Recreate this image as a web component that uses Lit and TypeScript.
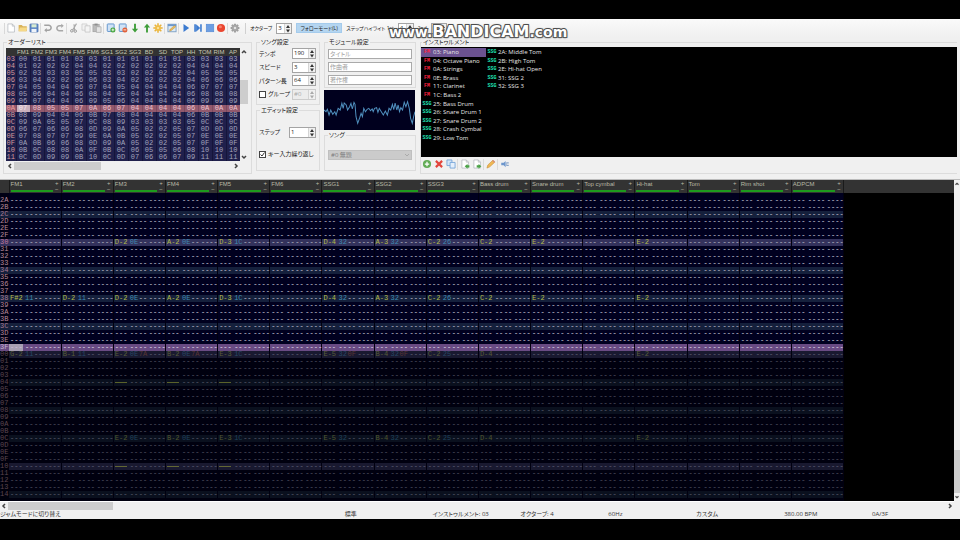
import { LitElement, html, css, svg, nothing, TemplateResult } from "lit";
import { customElement, property } from "lit/decorators.js";
import { classMap } from "lit/directives/class-map.js";

const ORDER_TRACKS = "FM1 FM2 FM3 FM4 FM5 FM6 SG1 SG2 SG3 BD SD TOP HH TOM RIM AP".split(" ");
const ORDER_ROWS = [
  "03 00 01 01 01 03 03 01 01 01 01 01 01 03 03 03 03",
  "04 01 02 02 02 04 04 02 02 02 02 02 02 04 04 04 04",
  "05 02 03 03 03 05 05 03 03 02 02 02 02 04 05 05 05",
  "06 03 04 02 02 06 06 03 04 02 02 02 02 04 06 06 06",
  "07 04 05 04 04 06 07 04 05 04 04 04 04 06 07 07 07",
  "08 05 06 04 04 06 08 04 05 04 04 04 04 06 08 08 08",
  "09 06 07 04 04 06 09 05 06 04 04 04 04 06 09 09 09",
  "0A 07 08 05 05 07 0A 06 07 04 04 04 04 06 0A 0A 0A",
  "0B 08 09 04 04 06 0B 07 08 04 04 04 04 06 0B 0B 0B",
  "0C 09 0A 05 05 07 0C 08 09 03 03 03 03 05 0C 0C 0C",
  "0D 06 07 06 06 08 0D 09 0A 05 02 02 05 07 0D 0D 0D",
  "0E 07 08 07 07 09 0E 0A 0B 05 02 02 05 07 0E 0E 0E",
  "0F 0A 0B 06 06 08 0D 09 0A 05 02 02 05 07 0F 0F 0F",
  "10 0B 0C 08 08 0A 0F 0B 0C 06 05 05 06 08 10 10 10",
  "11 0C 0D 09 09 0B 10 0C 0D 07 06 06 07 09 11 11 11",
].map((r) => r.split(" "));

const TRACKS = [
  "FM1", "FM2", "FM3", "FM4", "FM5", "FM6", "SSG1", "SSG2", "SSG3",
  "Bass drum", "Snare drum", "Top cymbal", "Hi-hat", "Tom", "Rim shot", "ADPCM",
];

type Steps = Record<number, Record<number, string>>;
const MAIN: Record<number, string> = {
  2: "D-2 0E", 3: "A-2 0E", 4: "D-3 1C", 6: "D-4 32", 7: "A-3 32", 8: "C-2 26",
  9: "C-2", 10: "E-2", 12: "E-2",
};
const CURRENT: Steps = { 0x30: MAIN, 0x38: { 0: "F#2 11", 1: "D-2 11", ...MAIN } };
const OFF: Record<number, string> = { 2: "off", 3: "off", 4: "off" };
const NEXT: Steps = {
  0x00: {
    0: "G-2 11", 1: "B-1 11", 2: "E-2 0E 7A", 3: "B-2 0E 7A", 4: "E-3 1C",
    6: "E-5 32 0F", 7: "B-4 32 0F", 8: "C-2 25", 9: "D-4", 12: "E-2",
  },
  0x04: OFF,
  0x0c: { 2: "E-2 0E", 3: "B-2 0E", 4: "E-3 1C", 6: "E-5 32", 7: "B-4 32", 8: "C-2 25", 9: "D-4", 12: "E-2" },
  0x10: OFF,
};

const INSTRUMENTS: [string, string][] = [
  ["FM", "03: Piano"], ["FM", "04: Octave Piano"], ["FM", "0A: Strings"], ["FM", "0E: Brass"],
  ["FM", "11: Clarinet"], ["FM", "1C: Bass 2"], ["SSG", "25: Bass Drum"], ["SSG", "26: Snare Drum 1"],
  ["SSG", "27: Snare Drum 2"], ["SSG", "28: Crash Cymbal"], ["SSG", "29: Low Tom"],
  ["SSG", "2A: Middle Tom"], ["SSG", "2B: High Tom"], ["SSG", "2E: Hi-hat Open"],
  ["SSG", "31: SSG 2"], ["SSG", "32: SSG 3"],
];

const page = svg`<path d="M3 1.500h7l3.500 3.500v9.500H3z" fill="#fff" stroke="#a9adb3"/><path d="M10 1.500v3.500h3.500" fill="none" stroke="#a9adb3"/>`;
const ICONS: Record<string, TemplateResult> = {
  new: page,
  open: svg`<path d="M1 3h5l2 2h6v8H1z" fill="#d9b35a"/><path d="M1 13L3 7h12l-2 6z" fill="#f6d987"/>`,
  save: svg`<rect x="1.500" y="1.500" width="13" height="13" rx="1" fill="#5d86c6" stroke="#476fae"/><rect x="4" y="2" width="8" height="5" fill="#d8ecd2"/><rect x="4" y="9.500" width="8" height="5" fill="#eef3fa"/>`,
  undo: svg`<path d="M2 3.500h7a3.800 3.800 0 0 1 0 8H4" fill="none" stroke="#a2a2a2" stroke-width="2.400"/><path d="M6 8l-4 3.500L6 15z" fill="#a2a2a2"/>`,
  redo: svg`<path d="M13 12.500H7a3.800 3.800 0 0 1 0-8h4" fill="none" stroke="#a8a8a8" stroke-width="2.400"/><path d="M10 1l4 3.500L10 8z" fill="#a8a8a8"/>`,
  cut: svg`<path d="M12 1L6 11M8 2l1 9" stroke="#a8a8a8" stroke-width="1.800"/><circle cx="4.500" cy="12.500" r="2" fill="none" stroke="#989898" stroke-width="1.600"/><circle cx="10" cy="13" r="2" fill="none" stroke="#989898" stroke-width="1.600"/>`,
  copy: svg`<path d="M1.500 1.500h8v10h-8z" fill="#f2f2f2" stroke="#c2c2c2"/><path d="M6.500 4.500h8v10h-8z" fill="#f4f4f4" stroke="#b8b8b8"/>`,
  paste: svg`<rect x="1.500" y="2" width="10" height="12" fill="#bcbcbc" stroke="#9c9c9c"/><rect x="4" y="1" width="5" height="3" fill="#8e8e8e"/><path d="M7 6h7.500v9H7z" fill="#e4e4e4" stroke="#a2a2a2"/>`,
  addrow: svg`<rect x="2" y="1.500" width="11" height="12" rx="1" fill="#cfe2f6" stroke="#5e92cc" stroke-width="1.500"/><circle cx="11" cy="11" r="4" fill="#46a53e"/><path d="M11 8.800v4.400M8.800 11h4.400" stroke="#fff" stroke-width="1.300"/>`,
  delrow: svg`<rect x="2" y="1.500" width="11" height="12" rx="1" fill="#cfe2f6" stroke="#5e92cc" stroke-width="1.500"/><circle cx="11" cy="11" r="4" fill="#e0603a"/><path d="M8.800 11h4.400" stroke="#fff" stroke-width="1.300"/>`,
  down: svg`<path d="M6.500 1h3v8H13l-5 6-5-6h3.500z" fill="#3f9e3a"/>`,
  up: svg`<path d="M6.500 15h3V7H13L8 1 3 7h3.500z" fill="#3f9e3a"/>`,
  gear: svg`<path d="M8 0.500v15M0.500 8h15M2.700 2.700l10.600 10.600M13.300 2.700L2.700 13.300" stroke="#e9b23a" stroke-width="2.400"/><circle cx="8" cy="8" r="4.600" fill="#efbd48"/><circle cx="8" cy="8" r="1.800" fill="#fbe7a8"/>`,
  edit: svg`<rect x="1.500" y="2" width="13" height="12" fill="#dcebf8" stroke="#7ea0c4" stroke-width="1.500"/><path d="M1.500 3.500h13" stroke="#6c98cc" stroke-width="3"/><path d="M4 13l1-3 7-6 2 2-7 6z" fill="#e8ba5c" stroke="#b98a34" stroke-width=".7"/>`,
  play: svg`<path d="M4 1.500L13 8l-9 6.500z" fill="#3c7bd0"/>`,
  playfrom: svg`<path d="M2 2h2.600v12H2zM5 2l6.500 6L5 14zM11.500 2H14v12h-2.500z" fill="#3c7bd0"/>`,
  stop: svg`<rect x="2" y="2" width="12" height="12" fill="#6c9ee2" stroke="#5288d4"/>`,
  record: svg`<circle cx="8" cy="8" r="6.500" fill="#ea4630"/><circle cx="7" cy="6" r="2.500" fill="#f4826c"/>`,
  settings: svg`<path d="M8 1v14M1 8h14M3 3l10 10M13 3L3 13" stroke="#9a9a9a" stroke-width="3"/><circle cx="8" cy="8" r="5.500" fill="#a6a6a6"/><circle cx="8" cy="8" r="2" fill="#e4e4e4"/>`,
  add: svg`<circle cx="8" cy="8" r="6.500" fill="#62ac55"/><path d="M8 4.500v7M4.500 8h7" stroke="#fff" stroke-width="2"/>`,
  remove: svg`<path d="M3 3l10 10M13 3L3 13" stroke="#e2453c" stroke-width="3.400"/>`,
  clone: svg`<path d="M1.500 1.500h8v9h-8z" fill="#d5e6f8" stroke="#6d9fd6" stroke-width="1.300"/><path d="M6.500 5.500h8v9h-8z" fill="#e4effb" stroke="#6d9fd6" stroke-width="1.300"/>`,
  load: svg`${page}<path d="M7.500 11.500L12 8v2h3v3.500h-3v2z" fill="#4aa246"/>`,
  store: svg`${page}<path d="M15 11.500L10.500 8v2h-3v3.500h3v2z" fill="#4aa246"/>`,
  pencil: svg`<path d="M1.500 14.500l1.500-5L11 2l3 3-8 7.500z" fill="#f0b954" stroke="#c8903a"/><path d="M10 3l1.500-1.500 3 3L13 6z" fill="#d88a7a"/>`,
  mono: svg`<path d="M2 6h4l3-3v10l-3-3H2z" fill="#6d96cc"/><path d="M10 5h4v2h-3v2h3v2h-4" fill="#89a4c8"/>`,
};
const icon = (name: string) => html`<svg viewBox="0 0 16 16" aria-hidden="true">${ICONS[name]}</svg>`;

const TOOLS: [string, string][][] = [
  [["new", "新規"], ["open", "開く"], ["save", "保存"]],
  [["undo", "元に戻す"], ["redo", "やり直し"]],
  [["cut", "切り取り"], ["copy", "コピー"], ["paste", "貼り付け"]],
  [["addrow", "オーダー追加"], ["delrow", "オーダー削除"], ["down", "下へ"], ["up", "上へ"], ["gear", "モジュール設定"]],
  [["edit", "インストゥルメント編集"]],
  [["play", "再生"], ["playfrom", "パターン再生"], ["stop", "停止"], ["record", "ジャムモード"]],
  [["settings", "設定"]],
];

const base = css`
  :host, * { box-sizing: border-box; }
  button, input, select { font: inherit; color: inherit; margin: 0; padding: 0; border: 0; }
  button { background: none; display: grid; place-items: center; }
  svg { display: block; }
  table { border-collapse: collapse; border-spacing: 0; table-layout: fixed; }
  th, td { padding: 0; font-weight: 400; }
`;

@customElement("scroll-rail")
class ScrollRail extends LitElement {
  @property({ type: Boolean, reflect: true }) vertical = false;
  @property({ type: Number }) start = 0;
  @property({ type: Number }) size = 0.2;
  static styles = css`
    :host { display: flex; background: #f0f0f0; height: 8px; }
    :host([vertical]) { flex-direction: column; width: auto; height: auto; }
    svg { flex: none; width: 8px; height: 8px; fill: none; stroke: #444; stroke-width: 1.500; }
    .track { flex: 1; display: flex; min-width: 0; min-height: 0; }
    :host([vertical]) .track { flex-direction: column; }
    :host([vertical]) svg { width: 100%; }
    .thumb { background: #cdcdcd; }
  `;
  render() {
    const arrows = this.vertical ? ["M2 5l2-2 2 2", "M2 3l2 2 2-2"] : ["M5 2L3 4l2 2", "M3 2l2 2-2 2"];
    return html`
      <svg viewBox="0 0 8 8"><path d=${arrows[0]} /></svg>
      <div class="track">
        <div style="flex:${this.start}"></div>
        <div class="thumb" style="flex:${this.size}"></div>
        <div style="flex:${1 - this.start - this.size}"></div>
      </div>
      <svg viewBox="0 0 8 8"><path d=${arrows[1]} /></svg>
    `;
  }
}

@customElement("spin-box")
class SpinBox extends LitElement {
  @property() value = "";
  @property() label = "";
  @property({ type: Boolean, reflect: true }) disabled = false;
  static styles = [base, css`
    :host { display: flex; width: 24px; height: 11px; border: 1px solid #a4a4a4; background: #fff; color: #222; }
    :host([disabled]) { background: #ececec; border-color: #ccc; color: #aaa; }
    input { flex: 1; min-width: 0; width: 0; padding-left: 1px; background: none; line-height: 9px; font-size: 6px; }
    .arrows { width: 7px; background: #f0f0f0; border-left: 1px solid #d4d4d4; }
    svg { width: 6px; height: 9px; fill: #333; }
    :host([disabled]) svg { fill: #aaa; }
  `];
  render() {
    return html`
      <input type="text" inputmode="numeric" .value=${this.value} aria-label=${this.label} ?disabled=${this.disabled} />
      <div class="arrows"><svg viewBox="0 0 6 9"><path d="M1 4l2-3 2 3zM1 5.500l2 3 2-3z" /></svg></div>
    `;
  }
}

@customElement("order-list")
class OrderList extends LitElement {
  static styles = [base, css`
    :host { display: grid; grid-template-columns: minmax(0, 1fr) 8px; }
    table { width: 100%; background: #20204c; color: #a3a3bd; font: 7px/7px "Liberation Mono", monospace; text-align: center; }
    thead { background: #333; color: #c8c8b4; font: 6px/8px "Liberation Sans", sans-serif; }
    thead th { height: 8px; white-space: nowrap; }
    .row { width: 10px; color: #d49a9c; }
    td, tbody th { height: 7px; border-left: 1px solid #15153a; }
    tbody th { border-left: 0; }
    .now td, .now th { background: #92596d; color: #ecc4d0; border-color: #7c4a60; }
    .now .cursor { background: #cbb1bd; color: #f3e8ee; }
    .now .row { color: #f0a0a0; }
    .side { background: #f0f0f0; }
    .bottom { grid-column: 1; margin-top: 1px; }
  `];
  render() {
    return html`
      <table aria-label="オーダーリスト">
        <thead><tr><th class="row"></th>${ORDER_TRACKS.map((t) => html`<th>${t}</th>`)}</tr></thead>
        <tbody>
          ${ORDER_ROWS.map(([id, ...cells]) => html`
            <tr class=${classMap({ now: id === "0A" })}>
              <th class="row">${id}</th>
              ${cells.map((c, i) => html`<td class=${classMap({ cursor: i === 0 })}>${c}</td>`)}
            </tr>`)}
        </tbody>
      </table>
      <scroll-rail class="side" vertical .start=${0.25} .size=${0.24}></scroll-rail>
      <scroll-rail class="bottom" .start=${0} .size=${0.4}></scroll-rail>
    `;
  }
}

@customElement("pattern-editor")
class PatternEditor extends LitElement {
  static styles = [base, css`
    :host { display: grid; grid-template-columns: minmax(0, 1fr) 6px; grid-template-rows: minmax(0, 1fr) 9px; background: #f0f0f0; }
    .canvas { overflow: hidden; background: linear-gradient(#333 13px, #000 13px); }
    table { width: 844px; font: 7px/7px "Liberation Mono", monospace; color: #9494a8; }
    thead { background: #333; color: #b9b9a6; font: 6px/8px "Liberation Sans", sans-serif; }
    thead th { height: 13px; border-right: 1px solid #1a1a1a; text-align: left; }
    .num { width: 9px; background: #000014; color: #b78a9a; text-align: left; }
    thead .num { background: #333; }
    .head { display: grid; grid-template-columns: minmax(0, 1fr) 8px; height: 13px; padding-left: 1px; }
    .name { white-space: nowrap; border-bottom: 2px solid #1d9a1d; height: 12px; line-height: 9px; }
    .signs { line-height: 6px; text-align: center; }
    .signs button { width: 8px; height: 6px; line-height: 6px; }
    td { background: #00001f; border-right: 1px solid #000010; }
    tbody th, td { height: 7px; }
    .cell { display: grid; grid-template-columns: 15px 9px 10px minmax(0, 1fr); height: 7px; padding-left: 1px; white-space: nowrap; font-weight: 700; }
    .beat td { background: #15203c; }
    .bar td { background: #34325c; }
    .beat .num { color: #a77a92; background: #15203c; }
    .bar .num { color: #c07aa0; background: #34325c; }
    .now td, .now .num { background: #694b83; color: #c3b4d0; }
    .now .cursor { background: linear-gradient(90deg, #a79fb2 14px, #694b83 14px); }
    .note, .inst, .vol { font-weight: 400; }
    .note { color: #b4bc4a; }
    .inst { color: #3f8ab2; }
    .vol { color: #b8603c; }
    .off { align-self: center; width: 12px; height: 1px; background: #d2dc3c; }
    .next td { background: #00000f; }
    .next .num { color: #5c4650; background: #00000c; }
    .next .cell { opacity: 0.4; }
    .next.beat td { background: #0a101e; }
    .next.bar td { background: #191930; }
    .lead td, .lead th { height: 4px; }
    .side { grid-column: 2; grid-row: 1; }
    .under { grid-column: 1; border-top: 1px solid #fff; height: 9px; }
  `];

  private cell(text = "") {
    const [note, inst, vol] = text.split(" ");
    return html`<div class="cell">
      ${note === "off" ? html`<i class="off"></i>` : html`<span class=${note ? "note" : ""}>${note || "---"}</span>`}
      <span class=${inst ? "inst" : ""}>${inst || "--"}</span>
      <span class=${vol ? "vol" : ""}>${vol || "--"}</span>
      <span>----</span>
    </div>`;
  }

  private row(n: number, steps: Steps, next: boolean) {
    const id = n.toString(16).toUpperCase().padStart(2, "0");
    const cls = {
      next,
      bar: n % 16 === 0,
      beat: n % 4 === 0 && n % 16 !== 0,
      now: !next && n === 0x3f,
    };
    return html`<tr class=${classMap(cls)}>
      <th class="num">${id}</th>
      ${TRACKS.map((_, i) => html`<td class=${classMap({ cursor: i === 0 })}>${this.cell(steps[n]?.[i])}</td>`)}
    </tr>`;
  }

  render() {
    const current = Array.from({ length: 0x40 - 0x2a }, (_, i) => this.row(0x2a + i, CURRENT, false));
    const next = Array.from({ length: 0x15 }, (_, i) => this.row(i, NEXT, true));
    const blank = (cls: string) => html`<tr class=${cls}><th class="num"></th>${TRACKS.map(() => html`<td></td>`)}</tr>`;
    return html`
      <div class="canvas">
        <table aria-label="パターンエディタ">
          <thead><tr>
            <th class="num"></th>
            ${TRACKS.map((t) => html`<th><div class="head">
              <div class="name">${t}</div>
              <div class="signs"><button aria-label="${t} 展開">+</button><button aria-label="${t} 縮小">−</button></div>
            </div></th>`)}
          </tr></thead>
          <tbody>${blank("lead")}${current}${next}${blank("lead next")}</tbody>
        </table>
      </div>
      <scroll-rail class="side" vertical .start=${0.86} .size=${0.14}></scroll-rail>
      <scroll-rail class="under" .start=${0} .size=${0.112}></scroll-rail>
    `;
  }
}

@customElement("app-root")
class AppRoot extends LitElement {
  static styles = [base, css`
    :host {
      display: flex; flex-direction: column; height: 100vh; padding: 19px 0 21px; background: #000; color: #222;
      font: 6px/8px "Open Sans", "Noto Sans CJK JP", sans-serif; font-feature-settings: "palt";
    }
    .toolbar { flex: none; position: relative; display: flex; align-items: center; height: 18px; padding-left: 4px; background: linear-gradient(#fafafa, #f0f0f0); }
    .tools { display: flex; align-items: center; width: 237px; margin-right: 4px; border-left: 1px solid #d8d8d8; }
    .tools button { flex: 1; }
    .tools svg, .actions svg { width: 10px; height: 10px; }
    .sep { width: 2px; height: 11px; border-left: 1px solid #dadada; }
    .controls { display: flex; align-items: center; gap: 4px; border-left: 1px solid #d0d0d0; padding-left: 4px; white-space: nowrap; font-size: 5px; }
    .controls label { display: flex; align-items: center; gap: 4px; }
    .follow { width: 46px; height: 10px; background: #b4d5f0; border: 1px solid #a4cbec; }
    .small { width: 16px; }
    .mark { position: absolute; left: 389px; top: 3px; display: flex; align-items: baseline; color: #fff; font: 700 14px/20px "DejaVu Sans", sans-serif; -webkit-text-stroke: 2px #555; paint-order: stroke fill; text-shadow: 0 0 2px #333, 0 1px 2px #777; }
    .mark b { font-size: 16px; }

    .panels { flex: none; display: grid; grid-template-columns: 249px 64px 92px minmax(0, 1fr); gap: 4px; padding: 1px 3px 5px; background: #f0f0f0; border-bottom: 1px solid #bbb; }
    fieldset { margin: 0; padding: 0 2px; min-width: 0; border: 1px solid #dcdcdc; }
    legend { margin-left: 1px; padding: 0 1px; height: 8px; line-height: 8px; }
    .order { padding: 2px 1px 3px 0; }
    .column { display: flex; flex-direction: column; gap: 1px; }
    .line { display: flex; align-items: center; justify-content: space-between; white-space: nowrap; }
    .song { display: grid; grid-template-rows: repeat(4, 1fr); height: 58px; padding: 1px 1px 3px 0; }
    .edit { display: grid; grid-template-rows: 22px 22px; padding: 7px 1px 5px 0; }
    .wide { width: 27px; }
    .check { display: flex; align-items: center; gap: 2px; }
    input[type="checkbox"] { appearance: none; width: 7px; height: 7px; border: 1px solid #444; background: #fff; }
    .tick { position: relative; display: grid; }
    .tick svg { position: absolute; left: 1px; top: 1px; width: 5px; height: 5px; fill: none; stroke: #333; stroke-width: 1; }
    .module { display: grid; gap: 3px; padding: 3px 1px 2px; }
    .text { width: 100%; height: 10px; padding: 0 1px; background: #fff; border: 1px solid #aaa; line-height: 8px; }
    .text::placeholder { color: #a0a0a0; }
    .wave { width: 91px; height: 40px; margin-top: 1px; background: #00001e; }
    .wave path { fill: none; stroke: #4f8fbe; stroke-width: 3; }
    .pick { padding: 11px 1px 10px; }
    .pick select { appearance: none; display: block; width: 100%; height: 10px; padding-left: 2px; background: #cbcbcb; border: 1px solid #c0c0c0; color: #7c7c7c; opacity: 1; line-height: 8px; }
    .combo { position: relative; }
    .combo svg { position: absolute; right: 2px; top: 3px; width: 6px; height: 4px; fill: none; stroke: #aaa; }

    .instruments { border-right: 0; padding: 0; }
    .list { display: grid; grid-auto-flow: column; grid-template-rows: repeat(11, 1fr); grid-template-columns: 65px 65px; height: 110px; margin: 1px 0 0; padding: 1px 0 15px; background: #000; color: #e6e6e6; list-style: none; }
    .list li { display: grid; grid-template-columns: 11px minmax(0, 1fr); align-items: center; padding-left: 1px; white-space: nowrap; line-height: 8px; }
    .list .selected { background: #6b5290; }
    .fm, .ssg { font: 700 5px/8px "Liberation Mono", monospace; text-align: center; color: #ff2040; width: 10px; }
    .ssg { color: #1fe0b4; }
    .actions { display: flex; align-items: center; height: 14px; }
    .actions button { width: 12px; }

    pattern-editor { flex: 1; min-height: 0; }
    .status { flex: none; display: grid; grid-template-columns: 345fr repeat(7, 88fr); height: 9px; line-height: 9px; background: #f0f0f0; color: #333; white-space: nowrap; }
  `];

  render() {
    return html`
      <header class="toolbar">
        <nav class="tools" aria-label="ツールバー">
          ${TOOLS.map((group, i) => html`
            ${i ? html`<span class="sep"></span>` : nothing}
            ${group.map(([id, label]) => html`<button aria-label=${label}>${icon(id)}</button>`)}
          `)}
        </nav>
        <div class="controls">
          <label>オクターブ <spin-box class="small" value="3" label="オクターブ"></spin-box></label>
          <button class="follow">フォローモード(L)</button>
          <label>ステップハイライト 1st <spin-box class="small" value="4" label="1st"></spin-box></label>
          <label>2nd <spin-box class="small" value="16" label="2nd"></spin-box></label>
        </div>
        <div class="mark"><span>www.</span><b>BANDICAM</b><span>.com</span></div>
      </header>

      <main class="panels">
        <fieldset><legend>オーダーリスト</legend><order-list class="order"></order-list></fieldset>

        <div class="column">
          <fieldset>
            <legend>ソング設定</legend>
            <div class="song">
              <div class="line">テンポ<spin-box value="190" label="テンポ"></spin-box></div>
              <div class="line">スピード<spin-box value="3" label="スピード"></spin-box></div>
              <div class="line">パターン長<spin-box value="64" label="パターン長"></spin-box></div>
              <div class="line">
                <label class="check"><input type="checkbox" />グループ</label>
                <spin-box value="#0" label="グループ番号" disabled></spin-box>
              </div>
            </div>
          </fieldset>
          <fieldset>
            <legend>エディット設定</legend>
            <div class="edit">
              <div class="line">ステップ<spin-box class="wide" value="1" label="ステップ"></spin-box></div>
              <label class="check">
                <span class="tick"><input type="checkbox" checked /><svg viewBox="0 0 5 5"><path d="M.5 2.500L2 4l2.500-3.500" /></svg></span>
                キー入力繰り返し
              </label>
            </div>
          </fieldset>
        </div>

        <div class="column">
          <fieldset>
            <legend>モジュール設定</legend>
            <div class="module">
              <input class="text" type="text" placeholder="タイトル" aria-label="タイトル" />
              <input class="text" type="text" placeholder="作曲者" aria-label="作曲者" />
              <input class="text" type="text" placeholder="著作権" aria-label="著作権" />
            </div>
          </fieldset>
          <svg class="wave" viewBox="252 225 270 120" preserveAspectRatio="none" role="img" aria-label="波形">
            <path d="M252 285L258 290 262 283 267 300 272 285 278 298 284 290 288 300 294 280 300 285 305 265 309 280 312 264 318 270 322 285 328 275 332 265 336 282 341 262 344 268 347 305 352 325 358 308 362 295 366 305 370 280 375 290 380 283 385 280 390 287 395 282 398 290 402 280 408 278 412 292 416 280 422 290 428 300 434 288 440 300 445 280 450 285 455 268 459 284 463 264 468 285 472 270 476 290 480 278 485 285 490 262 495 275 500 260 505 280 509 310 514 325 518 305 522 290" />
          </svg>
          <fieldset>
            <legend>ソング</legend>
            <div class="pick"><div class="combo">
              <select aria-label="ソング" disabled><option>#0 無題</option></select>
              <svg viewBox="0 0 6 4"><path d="M1 1l2 2 2-2" /></svg>
            </div></div>
          </fieldset>
        </div>

        <fieldset class="instruments">
          <legend>インストゥルメント</legend>
          <ul class="list">
            ${INSTRUMENTS.map(([kind, name], i) => html`
              <li class=${classMap({ selected: i === 0 })}><span class=${kind.toLowerCase()}>${kind}</span>${name}</li>`)}
          </ul>
          <div class="actions">
            <button aria-label="追加">${icon("add")}</button>
            <button aria-label="削除">${icon("remove")}</button>
            <button aria-label="複製">${icon("clone")}</button>
            <span class="sep"></span>
            <button aria-label="読み込み">${icon("load")}</button>
            <button aria-label="書き出し">${icon("store")}</button>
            <span class="sep"></span>
            <button aria-label="編集">${icon("pencil")}</button>
            <span class="sep"></span>
            <button aria-label="名前">${icon("mono")}</button>
          </div>
        </fieldset>
      </main>

      <pattern-editor></pattern-editor>

      <footer class="status">
        <span>ジャムモードに切り替え</span><span>標準</span><span>インストゥルメント: 03</span><span>オクターブ: 4</span>
        <span>60Hz</span><span>カスタム</span><span>380.00 BPM</span><span>0A/3F</span>
      </footer>
    `;
  }
}
